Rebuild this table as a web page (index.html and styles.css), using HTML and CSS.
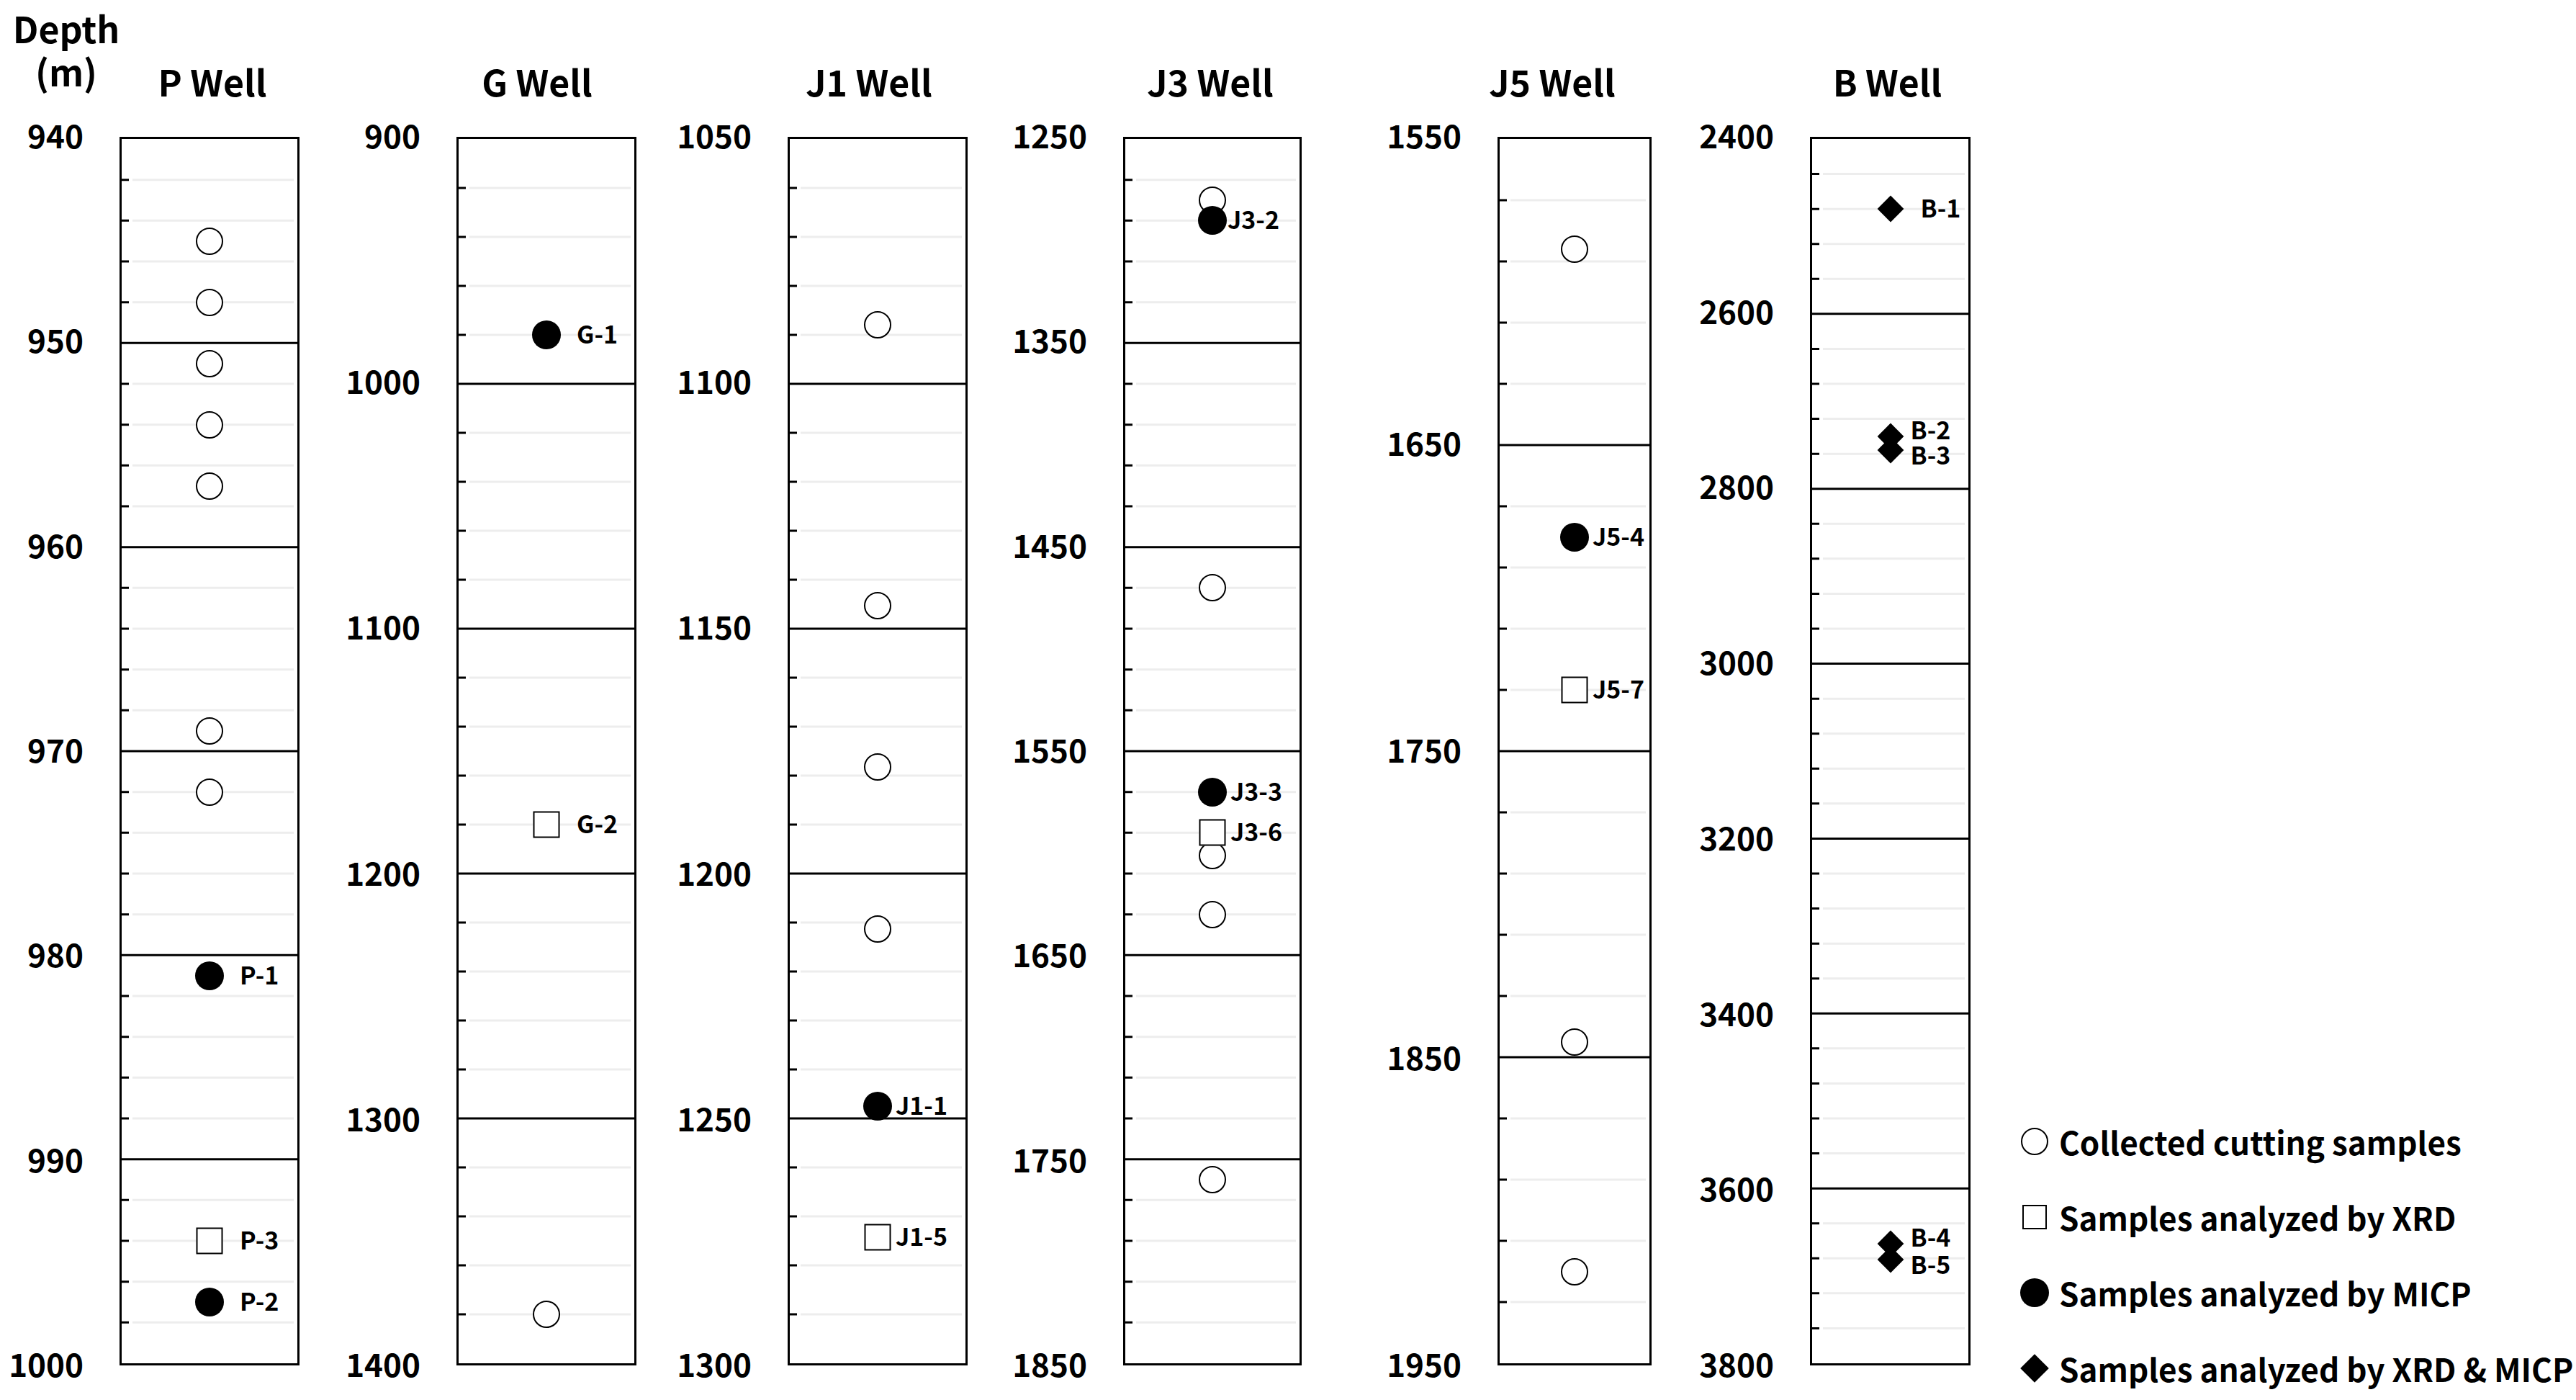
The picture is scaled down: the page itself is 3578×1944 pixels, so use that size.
FILE: index.html
```html
<!DOCTYPE html>
<html lang="en">
<head>
<meta charset="utf-8">
<title>Sample depths by well</title>
<link rel="stylesheet" href="styles.css">
</head>
<body>
<main class="figure">

  <section class="well well-p">
    <div class="depth-title"><span class="depth-line">Depth</span><span class="depth-line">(m)</span></div>
    <h2 class="well-title">P Well</h2>
    <div class="axis">
      <span class="tick-label" style="top:0%">940</span>
      <span class="tick-label" style="top:16.667%">950</span>
      <span class="tick-label" style="top:33.333%">960</span>
      <span class="tick-label" style="top:50%">970</span>
      <span class="tick-label" style="top:66.667%">980</span>
      <span class="tick-label" style="top:83.333%">990</span>
      <span class="tick-label" style="top:100%">1000</span>
    </div>
    <div class="box">
      <svg class="grid" viewBox="0 0 244 30" preserveAspectRatio="none" aria-hidden="true">
        <path class="g-minor" d="M15 1H239M15 2H239M15 3H239M15 4H239M15 6H239M15 7H239M15 8H239M15 9H239M15 11H239M15 12H239M15 13H239M15 14H239M15 16H239M15 17H239M15 18H239M15 19H239M15 21H239M15 22H239M15 23H239M15 24H239M15 26H239M15 27H239M15 28H239M15 29H239"/>
        <path class="g-tick" d="M0 1h10M0 2h10M0 3h10M0 4h10M0 6h10M0 7h10M0 8h10M0 9h10M0 11h10M0 12h10M0 13h10M0 14h10M0 16h10M0 17h10M0 18h10M0 19h10M0 21h10M0 22h10M0 23h10M0 24h10M0 26h10M0 27h10M0 28h10M0 29h10"/>
        <path class="g-major" d="M0 5H244M0 10H244M0 15H244M0 20H244M0 25H244"/>
      </svg>
      <div class="sample" style="top:8.333%"><span class="mk mk-open"></span></div>
      <div class="sample" style="top:13.333%"><span class="mk mk-open"></span></div>
      <div class="sample" style="top:18.333%"><span class="mk mk-open"></span></div>
      <div class="sample" style="top:23.333%"><span class="mk mk-open"></span></div>
      <div class="sample" style="top:28.333%"><span class="mk mk-open"></span></div>
      <div class="sample" style="top:48.333%"><span class="mk mk-open"></span></div>
      <div class="sample" style="top:53.333%"><span class="mk mk-open"></span></div>
      <div class="sample" style="top:68.333%"><span class="mk mk-fill"></span><span class="lbl lbl-far">P-1</span></div>
      <div class="sample" style="top:90%"><span class="mk mk-sq"></span><span class="lbl lbl-far">P-3</span></div>
      <div class="sample" style="top:95%"><span class="mk mk-fill"></span><span class="lbl lbl-far">P-2</span></div>
    </div>
  </section>

  <section class="well well-g">
    <h2 class="well-title">G Well</h2>
    <div class="axis">
      <span class="tick-label" style="top:0%">900</span>
      <span class="tick-label" style="top:20%">1000</span>
      <span class="tick-label" style="top:40%">1100</span>
      <span class="tick-label" style="top:60%">1200</span>
      <span class="tick-label" style="top:80%">1300</span>
      <span class="tick-label" style="top:100%">1400</span>
    </div>
    <div class="box">
      <svg class="grid" viewBox="0 0 244 25" preserveAspectRatio="none" aria-hidden="true">
        <path class="g-minor" d="M15 1H239M15 2H239M15 3H239M15 4H239M15 6H239M15 7H239M15 8H239M15 9H239M15 11H239M15 12H239M15 13H239M15 14H239M15 16H239M15 17H239M15 18H239M15 19H239M15 21H239M15 22H239M15 23H239M15 24H239"/>
        <path class="g-tick" d="M0 1h10M0 2h10M0 3h10M0 4h10M0 6h10M0 7h10M0 8h10M0 9h10M0 11h10M0 12h10M0 13h10M0 14h10M0 16h10M0 17h10M0 18h10M0 19h10M0 21h10M0 22h10M0 23h10M0 24h10"/>
        <path class="g-major" d="M0 5H244M0 10H244M0 15H244M0 20H244"/>
      </svg>
      <div class="sample" style="top:96%"><span class="mk mk-open"></span></div>
      <div class="sample" style="top:16%"><span class="mk mk-fill"></span><span class="lbl lbl-far">G-1</span></div>
      <div class="sample" style="top:56%"><span class="mk mk-sq"></span><span class="lbl lbl-far">G-2</span></div>
    </div>
  </section>

  <section class="well well-j1">
    <h2 class="well-title">J1 Well</h2>
    <div class="axis">
      <span class="tick-label" style="top:0%">1050</span>
      <span class="tick-label" style="top:20%">1100</span>
      <span class="tick-label" style="top:40%">1150</span>
      <span class="tick-label" style="top:60%">1200</span>
      <span class="tick-label" style="top:80%">1250</span>
      <span class="tick-label" style="top:100%">1300</span>
    </div>
    <div class="box">
      <svg class="grid" viewBox="0 0 244 25" preserveAspectRatio="none" aria-hidden="true">
        <path class="g-minor" d="M15 1H239M15 2H239M15 3H239M15 4H239M15 6H239M15 7H239M15 8H239M15 9H239M15 11H239M15 12H239M15 13H239M15 14H239M15 16H239M15 17H239M15 18H239M15 19H239M15 21H239M15 22H239M15 23H239M15 24H239"/>
        <path class="g-tick" d="M0 1h10M0 2h10M0 3h10M0 4h10M0 6h10M0 7h10M0 8h10M0 9h10M0 11h10M0 12h10M0 13h10M0 14h10M0 16h10M0 17h10M0 18h10M0 19h10M0 21h10M0 22h10M0 23h10M0 24h10"/>
        <path class="g-major" d="M0 5H244M0 10H244M0 15H244M0 20H244"/>
      </svg>
      <div class="sample" style="top:15.2%"><span class="mk mk-open"></span></div>
      <div class="sample" style="top:38.1%"><span class="mk mk-open"></span></div>
      <div class="sample" style="top:51.3%"><span class="mk mk-open"></span></div>
      <div class="sample" style="top:64.5%"><span class="mk mk-open"></span></div>
      <div class="sample" style="top:79%"><span class="mk mk-fill"></span><span class="lbl">J1-1</span></div>
      <div class="sample" style="top:89.7%"><span class="mk mk-sq"></span><span class="lbl">J1-5</span></div>
    </div>
  </section>

  <section class="well well-j3">
    <h2 class="well-title">J3 Well</h2>
    <div class="axis">
      <span class="tick-label" style="top:0%">1250</span>
      <span class="tick-label" style="top:16.667%">1350</span>
      <span class="tick-label" style="top:33.333%">1450</span>
      <span class="tick-label" style="top:50%">1550</span>
      <span class="tick-label" style="top:66.667%">1650</span>
      <span class="tick-label" style="top:83.333%">1750</span>
      <span class="tick-label" style="top:100%">1850</span>
    </div>
    <div class="box">
      <svg class="grid" viewBox="0 0 242 30" preserveAspectRatio="none" aria-hidden="true">
        <path class="g-minor" d="M15 1H237M15 2H237M15 3H237M15 4H237M15 6H237M15 7H237M15 8H237M15 9H237M15 11H237M15 12H237M15 13H237M15 14H237M15 16H237M15 17H237M15 18H237M15 19H237M15 21H237M15 22H237M15 23H237M15 24H237M15 26H237M15 27H237M15 28H237M15 29H237"/>
        <path class="g-tick" d="M0 1h10M0 2h10M0 3h10M0 4h10M0 6h10M0 7h10M0 8h10M0 9h10M0 11h10M0 12h10M0 13h10M0 14h10M0 16h10M0 17h10M0 18h10M0 19h10M0 21h10M0 22h10M0 23h10M0 24h10M0 26h10M0 27h10M0 28h10M0 29h10"/>
        <path class="g-major" d="M0 5H242M0 10H242M0 15H242M0 20H242M0 25H242"/>
      </svg>
      <div class="sample" style="top:5%"><span class="mk mk-open"></span></div>
      <div class="sample" style="top:36.667%"><span class="mk mk-open"></span></div>
      <div class="sample" style="top:58.5%"><span class="mk mk-open"></span></div>
      <div class="sample" style="top:63.333%"><span class="mk mk-open"></span></div>
      <div class="sample" style="top:85%"><span class="mk mk-open"></span></div>
      <div class="sample" style="top:6.667%"><span class="mk mk-fill"></span><span class="lbl lbl-tight">J3-2</span></div>
      <div class="sample" style="top:53.333%"><span class="mk mk-fill"></span><span class="lbl">J3-3</span></div>
      <div class="sample" style="top:56.667%"><span class="mk mk-sq"></span><span class="lbl">J3-6</span></div>
    </div>
  </section>

  <section class="well well-j5">
    <h2 class="well-title">J5 Well</h2>
    <div class="axis">
      <span class="tick-label" style="top:0%">1550</span>
      <span class="tick-label" style="top:25%">1650</span>
      <span class="tick-label" style="top:50%">1750</span>
      <span class="tick-label" style="top:75%">1850</span>
      <span class="tick-label" style="top:100%">1950</span>
    </div>
    <div class="box">
      <svg class="grid" viewBox="0 0 208 20" preserveAspectRatio="none" aria-hidden="true">
        <path class="g-minor" d="M15 1H203M15 2H203M15 3H203M15 4H203M15 6H203M15 7H203M15 8H203M15 9H203M15 11H203M15 12H203M15 13H203M15 14H203M15 16H203M15 17H203M15 18H203M15 19H203"/>
        <path class="g-tick" d="M0 1h10M0 2h10M0 3h10M0 4h10M0 6h10M0 7h10M0 8h10M0 9h10M0 11h10M0 12h10M0 13h10M0 14h10M0 16h10M0 17h10M0 18h10M0 19h10"/>
        <path class="g-major" d="M0 5H208M0 10H208M0 15H208"/>
      </svg>
      <div class="sample" style="top:9%"><span class="mk mk-open"></span></div>
      <div class="sample" style="top:73.75%"><span class="mk mk-open"></span></div>
      <div class="sample" style="top:92.5%"><span class="mk mk-open"></span></div>
      <div class="sample" style="top:32.5%"><span class="mk mk-fill"></span><span class="lbl">J5-4</span></div>
      <div class="sample" style="top:45%"><span class="mk mk-sq"></span><span class="lbl">J5-7</span></div>
    </div>
  </section>

  <section class="well well-b">
    <h2 class="well-title">B Well</h2>
    <div class="axis">
      <span class="tick-label" style="top:0%">2400</span>
      <span class="tick-label" style="top:14.286%">2600</span>
      <span class="tick-label" style="top:28.571%">2800</span>
      <span class="tick-label" style="top:42.857%">3000</span>
      <span class="tick-label" style="top:57.143%">3200</span>
      <span class="tick-label" style="top:71.429%">3400</span>
      <span class="tick-label" style="top:85.714%">3600</span>
      <span class="tick-label" style="top:100%">3800</span>
    </div>
    <div class="box">
      <svg class="grid" viewBox="0 0 217 35" preserveAspectRatio="none" aria-hidden="true">
        <path class="g-minor" d="M15 1H212M15 2H212M15 3H212M15 4H212M15 6H212M15 7H212M15 8H212M15 9H212M15 11H212M15 12H212M15 13H212M15 14H212M15 16H212M15 17H212M15 18H212M15 19H212M15 21H212M15 22H212M15 23H212M15 24H212M15 26H212M15 27H212M15 28H212M15 29H212M15 31H212M15 32H212M15 33H212M15 34H212"/>
        <path class="g-tick" d="M0 1h10M0 2h10M0 3h10M0 4h10M0 6h10M0 7h10M0 8h10M0 9h10M0 11h10M0 12h10M0 13h10M0 14h10M0 16h10M0 17h10M0 18h10M0 19h10M0 21h10M0 22h10M0 23h10M0 24h10M0 26h10M0 27h10M0 28h10M0 29h10M0 31h10M0 32h10M0 33h10M0 34h10"/>
        <path class="g-major" d="M0 5H217M0 10H217M0 15H217M0 20H217M0 25H217M0 30H217"/>
      </svg>
      <div class="sample" style="top:5.714%"><span class="mk mk-dia"></span><span class="lbl lbl-far">B-1</span></div>
      <div class="sample" style="top:24.3%"><span class="mk mk-dia"></span><span class="lbl lbl-b lbl-up">B-2</span></div>
      <div class="sample" style="top:25.4%"><span class="mk mk-dia"></span><span class="lbl lbl-b lbl-down">B-3</span></div>
      <div class="sample" style="top:90.25%"><span class="mk mk-dia"></span><span class="lbl lbl-b lbl-up">B-4</span></div>
      <div class="sample" style="top:91.5%"><span class="mk mk-dia"></span><span class="lbl lbl-b lbl-down">B-5</span></div>
    </div>
  </section>

  <aside class="legend">
    <div class="legend-row"><span class="legend-sym"><span class="lg lg-open"></span></span><span class="legend-text">Collected cutting samples</span></div>
    <div class="legend-row"><span class="legend-sym"><span class="lg lg-sq"></span></span><span class="legend-text">Samples analyzed by XRD</span></div>
    <div class="legend-row"><span class="legend-sym"><span class="lg lg-fill"></span></span><span class="legend-text">Samples analyzed by MICP</span></div>
    <div class="legend-row"><span class="legend-sym"><span class="lg lg-dia"></span></span><span class="legend-text">Samples analyzed by XRD &amp; MICP</span></div>
  </aside>

</main>
</body>
</html>
```

FILE: styles.css
```css
html, body {
  margin: 0;
  padding: 0;
  background: #ffffff;
}

body {
  font-family: "Noto Sans CJK JP", "Noto Sans", "Liberation Sans", sans-serif;
  color: #000000;
}

.figure {
  display: flex;
  align-items: flex-start;
  width: 3578px;
  height: 1944px;
  padding-left: 6px;
  box-sizing: border-box;
  overflow: hidden;
}

/* ---------- one well column ---------- */
.well {
  display: grid;
  grid-template-columns: 110px var(--bw);
  grid-template-rows: 190px 1706px;
  column-gap: 50px;
  flex: none;
}

.well-p  { --bw: 250px; }
.well-g  { --bw: 250px; margin-left: 58px; }
.well-j1 { --bw: 250px; margin-left: 50px; }
.well-j3 { --bw: 248px; margin-left: 56px; }
.well-j5 { --bw: 214px; margin-left: 112px; }
.well-b  { --bw: 223px; margin-left: 60px; }

.depth-title {
  grid-column: 1;
  grid-row: 1;
  align-self: start;
  display: flex;
  flex-direction: column;
  align-items: center;
  width: 150px;
  margin: 8px 0 0 11px;
  font-size: 50px;
  font-weight: 700;
}

.depth-line {
  display: block;
  height: 60px;
  line-height: 60px;
  white-space: nowrap;
}

.well-title {
  grid-column: 2;
  grid-row: 1;
  align-self: end;
  margin: 0 0 53px 0;
  font-size: 50px;
  line-height: 50px;
  font-weight: 700;
  text-align: center;
  white-space: nowrap;
}

.well-p .well-title  { margin-left: 8px; }
.well-g .well-title  { margin-right: 26px; }
.well-j1 .well-title { margin-right: 24px; }
.well-j3 .well-title { margin-right: 6px; }
.well-j5 .well-title { margin-left: -62px; }
.well-b .well-title  { margin-right: 8px; }

/* ---------- depth axis ---------- */
.axis {
  grid-column: 1;
  grid-row: 2;
  position: relative;
}

.tick-label {
  position: absolute;
  right: 0;
  transform: translateY(calc(-50% - 3px));
  font-size: 44px;
  line-height: 44px;
  font-weight: 700;
  white-space: nowrap;
}

/* ---------- plot box ---------- */
.box {
  grid-column: 2;
  grid-row: 2;
  position: relative;
  border: 3px solid #000000;
  box-sizing: border-box;
  background: #ffffff;
}

.grid {
  position: absolute;
  left: 0;
  top: 0;
  width: 100%;
  height: 100%;
  display: block;
}

.grid path {
  fill: none;
  stroke-width: 3px;
  vector-effect: non-scaling-stroke;
}

.g-minor { stroke: #ededed; }
.g-tick  { stroke: #000000; }
.g-major { stroke: #000000; }

/* ---------- samples ---------- */
.sample {
  position: absolute;
  left: 50%;
  width: 0;
  height: 0;
}

.mk {
  position: absolute;
  left: 0;
  top: 0;
  box-sizing: border-box;
  transform: translate(-50%, -50%);
}

.mk-open {
  width: 38px;
  height: 38px;
  border: 2.5px solid #000000;
  border-radius: 50%;
  background: #ffffff;
}

.mk-fill {
  width: 40px;
  height: 40px;
  border-radius: 50%;
  background: #000000;
}

.mk-sq {
  width: 37px;
  height: 37px;
  border: 2.5px solid #000000;
  background: #ffffff;
}

.mk-dia {
  width: 26px;
  height: 26px;
  background: #000000;
  transform: translate(-50%, -50%) rotate(45deg);
}

.lbl {
  position: absolute;
  top: 0;
  left: 25px;
  transform: translateY(calc(-50% - 2px));
  font-size: 34px;
  line-height: 30px;
  font-weight: 700;
  white-space: nowrap;
}

.lbl-tight { left: 21px; }
.lbl-b     { left: 28px; }
.lbl-far   { left: 42px; }
.lbl-up    { transform: translateY(calc(-50% - 10px)); }
.lbl-down  { transform: translateY(calc(-50% + 6px)); }

/* ---------- legend ---------- */
.legend {
  align-self: flex-end;
  flex: none;
  display: flex;
  flex-direction: column;
  gap: 53px;
  margin: 0 0 18px 69px;
}

.legend-row {
  display: flex;
  align-items: center;
  height: 52px;
  gap: 14px;
}

.legend-sym {
  width: 40px;
  height: 40px;
  display: flex;
  align-items: center;
  justify-content: center;
}

.lg {
  display: block;
  box-sizing: border-box;
}

.lg-open {
  width: 38px;
  height: 38px;
  border: 2.5px solid #000000;
  border-radius: 50%;
}

.lg-sq {
  width: 34px;
  height: 34px;
  border: 2.5px solid #000000;
}

.lg-fill {
  width: 40px;
  height: 40px;
  border-radius: 50%;
  background: #000000;
}

.lg-dia {
  width: 28px;
  height: 28px;
  background: #000000;
  transform: rotate(45deg);
}

.legend-text {
  font-size: 44px;
  line-height: 44px;
  font-weight: 700;
  white-space: nowrap;
}
```
